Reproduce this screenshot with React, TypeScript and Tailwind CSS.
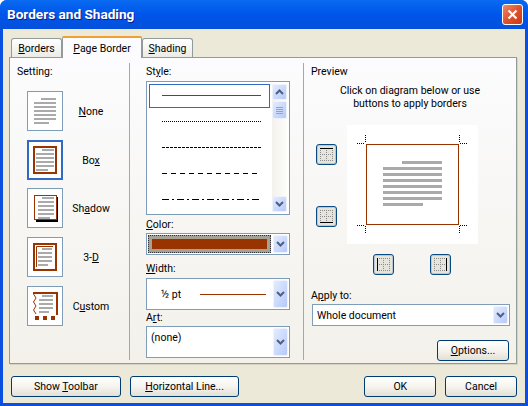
import type { ReactNode } from 'react'

const BRICK = '#993300'
const LINE = '#aaaaaa'

function Chevron({ up = false }: { up?: boolean }) {
  return (
    <svg width="9" height="6" viewBox="0 0 9 6" className={up ? 'rotate-180' : ''}>
      <path d="M1 1 L4.5 4.5 L8 1" fill="none" stroke="#4d6185" strokeWidth="2" />
    </svg>
  )
}

function ScrollButton({ up = false, className = '' }: { up?: boolean; className?: string }) {
  return (
    <div
      className={`flex items-center justify-center rounded-[2px] border border-[#eef2fd] bg-gradient-to-br from-[#e3ebfe] to-[#b6caf9] ${className}`}
    >
      <Chevron up={up} />
    </div>
  )
}

function TextLines({ x1, x2, first, y, count, indent }: { x1: number; x2: number; first: number; y: number; count: number; indent: number }) {
  const rows = Array.from({ length: count }, (_, i) => i)
  return (
    <>
      {rows.map((i) => (
        <rect
          key={i}
          x={i === 0 ? first : x1}
          y={y + i * 4}
          width={i === 0 ? x2 - first : i === count - 1 ? indent : x2 - x1}
          height="2"
          fill={LINE}
        />
      ))}
    </>
  )
}

function SettingThumb({ kind, selected }: { kind: string; selected: boolean }) {
  return (
    <div
      className={`h-[40px] w-[36px] shrink-0 bg-white ${
        selected ? 'border-2 border-[#316ac5]' : 'border border-[#7f9db9]'
      }`}
    >
      <svg
        width="36"
        height="40"
        viewBox="0 0 36 40"
        className={selected ? '-ml-[2px] -mt-[2px]' : '-ml-px -mt-px'}
      >
        {kind === 'none' && <TextLines x1={7} x2={29} first={14} y={7} count={7} indent={15} />}
        {kind === 'box' && (
          <>
            <rect x="7" y="7" width="22" height="26" fill="none" stroke={BRICK} strokeWidth="2" />
            <TextLines x1={9} x2={27} first={15} y={9} count={6} indent={12} />
          </>
        )}
        {kind === 'shadow' && (
          <>
            <rect x="9" y="9" width="22" height="25" fill="#000" />
            <rect x="7.5" y="7.5" width="22" height="24" fill="#fff" stroke={BRICK} />
            <TextLines x1={11} x2={27} first={15} y={9} count={6} indent={12} />
          </>
        )}
        {kind === '3d' && (
          <>
            <rect x="7" y="7" width="22" height="26" fill="none" stroke={BRICK} strokeWidth="2" />
            <path d="M9.5 30 V9.5 H26" fill="none" stroke={BRICK} />
            <TextLines x1={11} x2={25} first={15} y={11} count={5} indent={10} />
          </>
        )}
        {kind === 'custom' && (
          <>
            <rect x="6" y="6" width="24" height="2" fill={BRICK} />
            <rect x="29" y="6" width="2" height="23" fill={BRICK} />
            <path d="M6.5 8 L9 12 L6.5 16 L9 20 L6.5 24 L9 28" fill="none" stroke={BRICK} />
            <rect x="8" y="30" width="4" height="4" fill={BRICK} />
            <rect x="16" y="30" width="4" height="4" fill={BRICK} />
            <rect x="24" y="30" width="4" height="4" fill={BRICK} />
            <TextLines x1={12} x2={26} first={15} y={9} count={5} indent={10} />
          </>
        )}
      </svg>
    </div>
  )
}

function BorderToggle({ side }: { side: 'top' | 'bottom' | 'left' | 'right' }) {
  const dots = '#8c8c8c'
  return (
    <div className="flex h-[21px] w-[21px] items-center justify-center rounded-[3px] border border-[#0a4a83] bg-[#e6e5dc] shadow-[inset_0_0_0_1px_#b9c9d8]">
      <svg width="13" height="13" viewBox="0 0 13 13">
        <g fill="none" stroke={dots} strokeDasharray="1 1">
          <path d="M0.5 0 V13" />
          <path d="M12.5 0 V13" />
          <path d="M6.5 0 V13" />
          <path d="M0 0.5 H13" />
          <path d="M0 6.5 H13" />
          <path d="M0 12.5 H13" />
        </g>
        {side === 'top' && <rect x="0" y="0" width="13" height="1" fill="#000" />}
        {side === 'bottom' && <rect x="0" y="12" width="13" height="1" fill="#000" />}
        {side === 'left' && <rect x="0" y="0" width="1" height="13" fill="#000" />}
        {side === 'right' && <rect x="12" y="0" width="1" height="13" fill="#000" />}
      </svg>
    </div>
  )
}

function XpButton({ children, className = '' }: { children: ReactNode; className?: string }) {
  return (
    <div
      className={`flex h-[21px] items-center justify-center rounded-[3px] border border-[#003c74] bg-gradient-to-b from-white via-[#f5f4ee] to-[#e3e0d4] ${className}`}
    >
      <span>{children}</span>
    </div>
  )
}

function Combo({ children, className = '' }: { children: ReactNode; className?: string }) {
  return (
    <div className={`flex border border-[#7f9db9] bg-white p-px ${className}`}>
      <div className="min-w-0 flex-1">{children}</div>
      <ScrollButton className="w-[15px]" />
    </div>
  )
}

const settings = [
  { kind: 'none', label: <><u>N</u>one</>, gap: 'mt-[13px]' },
  { kind: 'box', label: <>Bo<u>x</u></>, gap: 'mt-[9px]' },
  { kind: 'shadow', label: <>Sh<u>a</u>dow</>, gap: 'mt-[8px]' },
  { kind: '3d', label: <>3-<u>D</u></>, gap: 'mt-[9px]' },
  { kind: 'custom', label: <>C<u>u</u>stom</>, gap: 'mt-[9px]' },
]

const styleRows = [
  { dash: '1 1', y: 37 },
  { dash: '3 1', y: 63 },
  { dash: '5 4', y: 89 },
  { dash: '7 3 2 3', y: 115 },
]

export default function App() {
  return (
    <div
      className="flex h-[406px] w-[528px] flex-col overflow-hidden rounded-t-[7px] bg-[#0a4fe0] text-[10.5px] leading-[13px] text-black"
      style={{ fontFamily: 'Roboto, "Liberation Sans", sans-serif' }}
    >
      {/* Title bar */}
      <div className="flex h-[29px] shrink-0 items-center justify-between bg-gradient-to-b from-[#0a6af0] via-[#0055ea] to-[#0450da] pl-[7px] pr-[5px]">
        <span className="text-[13.6px] font-bold text-white [text-shadow:1px_1px_0_#0f1f8a]">Borders and Shading</span>
        <div className="flex h-[21px] w-[21px] items-center justify-center rounded-[3px] border border-white bg-gradient-to-br from-[#e98a6d] via-[#e0502c] to-[#c73a12]">
          <svg width="11" height="11" viewBox="0 0 11 11">
            <path d="M1.5 1.5 L9.5 9.5 M9.5 1.5 L1.5 9.5" stroke="#fff" strokeWidth="2.2" />
          </svg>
        </div>
      </div>

      {/* Client area */}
      <div className="mx-[3px] mb-[3px] flex min-h-0 flex-1 flex-col bg-[#ece9d8] pl-[6px] pr-[8px] pt-[7px]">
        {/* Tabs */}
        <div className="flex h-[21px] shrink-0 items-end pl-[2px]">
          <div className="flex h-[19px] w-[51px] items-center justify-center rounded-t-[3px] border border-b-0 border-[#919b9c] bg-gradient-to-b from-white to-[#ecebe5]">
            <span><u>B</u>orders</span>
          </div>
          <div className="relative z-10 -mb-px flex h-[22px] w-[80px] flex-col rounded-t-[3px] border-x border-[#919b9c] bg-[#fcfcfe]">
            <div className="-mx-px h-[2px] rounded-t-[3px] bg-[#f0a030]" />
            <div className="flex flex-1 items-center justify-center">
              <span><u>P</u>age Border</span>
            </div>
          </div>
          <div className="flex h-[19px] w-[51px] items-center justify-center rounded-t-[3px] border border-b-0 border-[#919b9c] bg-gradient-to-b from-white to-[#ecebe5]">
            <span><u>S</u>hading</span>
          </div>
        </div>

        {/* Panel */}
        <div className="flex h-[307px] w-[508px] shrink-0 border border-[#919b9c] bg-gradient-to-b from-[#fcfcfe] to-[#f3f1ea] shadow-[1px_1px_0_#d6d3c4]">
          {/* Setting column */}
          <div className="w-[119px] shrink-0 pt-[7px]">
            <div className="pl-[7px]">Setting:</div>
            {settings.map((s) => (
              <div key={s.kind} className={`flex items-center pl-[17px] ${s.gap}`}>
                <SettingThumb kind={s.kind} selected={s.kind === 'box'} />
                <div className="w-[56px] text-center">{s.label}</div>
              </div>
            ))}
          </div>

          <div className="mb-[3px] mt-[5px] w-px shrink-0 bg-[#aca899]" />

          {/* Style column */}
          <div className="w-[173px] shrink-0 pl-[16px] pr-[13px] pt-[7px]">
            <div>St<u>y</u>le:</div>
            <div className="mt-[3px] flex h-[134px] border border-[#7f9db9] bg-white p-[2px]">
              <div className="relative w-[122px] shrink-0">
                <svg width="122" height="128" viewBox="0 0 122 128">
                  <rect x="0.5" y="0.5" width="120" height="23" fill="none" stroke="#316ac5" />
                  <path d="M13 11.5 H112" stroke={BRICK} />
                  {styleRows.map((r) => (
                    <path key={r.y} d={`M13 ${r.y}.5 H112`} stroke="#000" strokeDasharray={r.dash} />
                  ))}
                </svg>
              </div>
              <div className="ml-px flex w-[16px] flex-col bg-gradient-to-r from-[#f3f1ec] to-[#fdfdfa]">
                <ScrollButton up className="h-[16px]" />
                <div className="mt-[1px] flex h-[18px] items-center justify-center rounded-[2px] border border-[#eef2fd] bg-gradient-to-br from-[#e3ebfe] to-[#b6caf9]">
                  <svg width="7" height="7" viewBox="0 0 7 7">
                    <path d="M0 0.5 H7 M0 2.5 H7 M0 4.5 H7 M0 6.5 H7" stroke="#8ba3dd" />
                  </svg>
                </div>
                <ScrollButton className="mt-auto h-[16px]" />
              </div>
            </div>

            <div className="mt-[3px]"><u>C</u>olor:</div>
            <Combo className="mt-[2px] h-[22px]">
              <div className="mr-[2px] h-full border border-dotted border-[#333333] bg-[#a8a294] p-[3px]">
                <div className="h-full bg-[#993300]" />
              </div>
            </Combo>

            <div className="mt-[7px]"><u>W</u>idth:</div>
            <Combo className="mt-[3px] h-[32px]">
              <div className="flex h-full items-center pl-[13px]">
                <span className="w-[39px]">½ pt</span>
                <div className="h-px w-[66px] bg-[#993300]" />
              </div>
            </Combo>

            <div className="mt-[1px]">A<u>r</u>t:</div>
            <Combo className="mt-[2px] h-[32px]">
              <div className="pl-[3px] pt-[3px]">(none)</div>
            </Combo>
          </div>

          <div className="mb-[3px] mt-[5px] w-px shrink-0 bg-[#aca899]" />

          {/* Preview column */}
          <div className="min-w-0 flex-1 pt-[7px]">
            <div className="pl-[7px]">Preview</div>
            <div className="mt-[6px] text-center leading-[13px]">
              Click on diagram below or use
              <br />
              buttons to apply borders
            </div>
            <div className="mt-[15px] flex">
              <div className="ml-[12px] mr-[10px] flex w-[21px] flex-col gap-[41px] pt-[19px]">
                <BorderToggle side="top" />
                <BorderToggle side="bottom" />
              </div>
              <div className="h-[119px] w-[131px] bg-white">
                <svg width="131" height="119" viewBox="0 0 131 119">
                  <g stroke="#000" strokeDasharray="1 1" fill="none">
                    <path d="M18.5 10 V18" />
                    <path d="M112.5 10 V18" />
                    <path d="M18.5 101 V109" />
                    <path d="M112.5 101 V109" />
                    <path d="M10 18.5 H18" />
                    <path d="M113 18.5 H121" />
                    <path d="M10 100.5 H18" />
                    <path d="M113 100.5 H121" />
                  </g>
                  <rect x="19.5" y="19.5" width="92" height="80" fill="none" stroke={BRICK} />
                  <rect x="55" y="36" width="40" height="3" fill={LINE} />
                  {[42, 48, 54, 60, 66, 72].map((y) => (
                    <rect key={y} x="36" y={y} width="59" height="3" fill={LINE} />
                  ))}
                  <rect x="36" y="78" width="40" height="3" fill={LINE} />
                </svg>
              </div>
            </div>
            <div className="ml-[69px] mt-[10px] flex gap-[36px]">
              <BorderToggle side="left" />
              <BorderToggle side="right" />
            </div>
            <div className="ml-[7px] mt-[14px]">A<u>p</u>ply to:</div>
            <div className="ml-[8px] mt-[2px] flex h-[22px] w-[198px] border border-[#7f9db9] bg-white p-px">
              <div className="flex-1 pl-[3px] leading-[19px]">Whole document</div>
              <ScrollButton className="w-[15px]" />
            </div>
            <div className="mr-[7px] mt-[14px] flex justify-end">
              <XpButton className="w-[72px]"><u>O</u>ptions...</XpButton>
            </div>
          </div>
        </div>

        {/* Footer buttons */}
        <div className="mt-[12px] flex">
          <XpButton className="ml-[2px] w-[110px]">Show <u>T</u>oolbar</XpButton>
          <XpButton className="ml-[9px] w-[110px]"><u>H</u>orizontal Line...</XpButton>
          <XpButton className="ml-[125px] w-[72px]">OK</XpButton>
          <XpButton className="ml-[9px] w-[72px]">Cancel</XpButton>
        </div>
      </div>
    </div>
  )
}
